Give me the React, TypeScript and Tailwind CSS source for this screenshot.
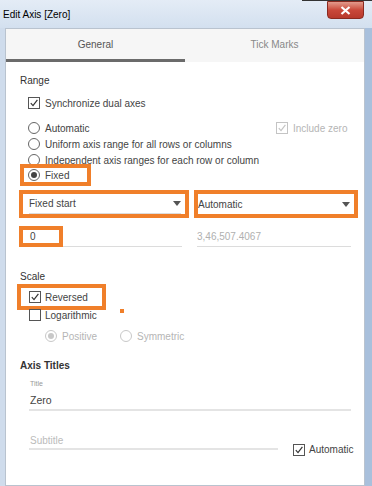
import React from "react";

const font = { fontFamily: '"Liberation Sans", Arial, sans-serif' };

// small square checkbox with optional tick
const Check = ({ on, dim }: { on?: boolean; dim?: boolean }) => (
  <span
    className={`flex h-[12px] w-[12px] shrink-0 items-center justify-center border bg-white ${
      dim ? "border-[#c4c4c4]" : "border-[#555]"
    }`}
  >
    {on && (
      <svg width="10" height="10" viewBox="0 0 10 10">
        <path
          d="M1.8 5.2 L4 7.6 L8.4 1.8"
          fill="none"
          stroke={dim ? "#c4c4c4" : "#333"}
          strokeWidth="1.2"
        />
      </svg>
    )}
  </span>
);

// round radio button
const Radio = ({ on, dim }: { on?: boolean; dim?: boolean }) => (
  <span
    className={`flex h-[12px] w-[12px] shrink-0 items-center justify-center rounded-full border bg-white ${
      dim ? "border-[#c8c8c8]" : "border-[#666]"
    }`}
  >
    {on && (
      <span
        className={`h-[6px] w-[6px] rounded-full ${dim ? "bg-[#c8c8c8]" : "bg-[#444]"}`}
      />
    )}
  </span>
);

const Arrow = () => (
  <svg width="8" height="5" viewBox="0 0 8 5">
    <path d="M0 0 L8 0 L4 5 Z" fill="#555" />
  </svg>
);

export default function App() {
  return (
    <div
      style={font}
      className="flex h-[486px] w-[372px] flex-col overflow-hidden bg-[#c9d8ea] text-[10px] text-[#444]"
    >
      {/* window title bar */}
      <div className="relative flex h-[28px] shrink-0 items-center bg-gradient-to-b from-[#e4ecf6] to-[#d3e0ef] pl-[3px]">
        <span className="text-[10px] text-black">Edit Axis [Zero]</span>
        <div className="absolute right-[8px] top-[1px] flex h-[18px] w-[37px] items-center justify-center rounded-b-[4px] border border-[#8a2a20] bg-gradient-to-b from-[#e29a8c] via-[#c9483a] to-[#b8392c]">
          <svg width="11" height="9" viewBox="0 0 11 9">
            <path d="M1.5 1 L9.5 8 M9.5 1 L1.5 8" stroke="white" strokeWidth="2.2" />
          </svg>
        </div>
        <div className="absolute right-0 top-0 h-[1px] w-[70px] bg-[#333]" />
      </div>

      <div className="flex flex-1">
        <div className="w-[5px] shrink-0 bg-[#cfdcec]" />

        {/* dialog panel */}
        <div className="flex w-[360px] flex-col border border-[#b9c3cf] bg-white">
          {/* tabs */}
          <div className="flex h-[33px] shrink-0 bg-[#f6f6f6]">
            <div className="flex w-[180px] flex-col">
              <div className="flex flex-1 items-center justify-center text-[10px] text-[#555]">
                General
              </div>
              <div className="h-[3px] bg-[#6b6b6b]" />
            </div>
            <div className="flex w-[180px] items-center justify-center pb-[3px] text-[10px] text-[#888]">
              Tick Marks
            </div>
          </div>

          <div className="flex flex-col pl-[14px] pr-[6px]">
            {/* Range */}
            <div className="mt-[11px] h-[16px] font-medium leading-[16px] text-[#333]">Range</div>
            <div className="mt-[6px] flex h-[16px] items-center gap-[5px] pl-[8px]">
              <Check on />
              <span>Synchronize dual axes</span>
            </div>
            <div className="mt-[9px] flex h-[16px] items-center gap-[5px] pl-[8px]">
              <Radio />
              <span className="w-[226px]">Automatic</span>
              <Check on dim />
              <span className="text-[#b5b5b5]">Include zero</span>
            </div>
            <div className="flex h-[16px] items-center gap-[5px] pl-[8px]">
              <Radio />
              <span>Uniform axis range for all rows or columns</span>
            </div>
            <div className="flex h-[16px] items-center gap-[5px] pl-[8px]">
              <Radio />
              <span>Independent axis ranges for each row or column</span>
            </div>
            <div className="-mt-[4px] flex h-[22px] w-[71px] items-center gap-[5px] border-4 border-[#f07f2a] pl-[4px]">
              <Radio on />
              <span>Fixed</span>
            </div>

            {/* range dropdowns */}
            <div className="mt-[4px] flex gap-[5px]">
              <div className="-ml-[1px] flex h-[28px] w-[170px] flex-col border-4 border-[#f07f2a] pl-[6px] pr-[4px]">
                <div className="flex flex-1 items-center justify-between border-b border-[#dcdcdc]">
                  <span>Fixed start</span>
                  <Arrow />
                </div>
              </div>
              <div className="flex h-[28px] w-[164px] items-center justify-between border-4 border-[#f07f2a] pr-[4px]">
                <span>Automatic</span>
                <Arrow />
              </div>
            </div>

            {/* range values */}
            <div className="mt-[8px] flex gap-[15px] pl-[9px]">
              <div className="relative flex h-[21px] w-[153px] items-center border-b border-[#dcdcdc]">
                <span className="pl-[1px]">0</span>
                <div className="absolute -left-[10px] top-0 h-[21px] w-[44px] border-4 border-[#f07f2a]" />
              </div>
              <div className="flex h-[21px] w-[154px] items-center border-b border-[#dcdcdc] text-[#b0b0b0]">
                3,46,507.4067
              </div>
            </div>

            {/* Scale */}
            <div className="mt-[22px] h-[16px] font-medium leading-[16px] text-[#333]">Scale</div>
            <div className="-ml-[3px] -mt-[1px] flex h-[26px] w-[89px] items-center gap-[4px] border-4 border-[#f07f2a] pl-[8px]">
              <Check on />
              <span>Reversed</span>
            </div>
            <div className="relative -mt-[3px] flex h-[16px] items-center gap-[4px] pl-[9px]">
              <Check />
              <span>Logarithmic</span>
              <span className="absolute left-[100px] top-[2px] h-[4px] w-[4px] bg-[#f07f2a]" />
            </div>
            <div className="mt-[5px] flex h-[16px] items-center pl-[25px] text-[#b5b5b5]">
              <Radio on dim />
              <span className="ml-[5px] w-[58px]">Positive</span>
              <Radio dim />
              <span className="ml-[5px]">Symmetric</span>
            </div>

            {/* Axis Titles */}
            <div className="mt-[14px] h-[16px] font-bold leading-[16px] text-[#333]">Axis Titles</div>
            <div className="ml-[10px] mt-[5px] h-[10px] text-[7px] leading-[10px] text-[#999]">
              Title
            </div>
            <div className="ml-[9px] mt-[3px] flex h-[19px] w-[322px] items-start border-b-2 border-[#e4e4e4] pl-[1px] text-[10.5px] leading-[16px]">
              Zero
            </div>
            <div className="mt-[22px] flex items-start">
              <div className="ml-[9px] h-[17px] w-[249px] border-b-2 border-[#e4e4e4] pl-[1px] leading-[16px] text-[#bbb]">
                Subtitle
              </div>
              <div className="ml-[15px] mt-[9px] flex items-center gap-[4px]">
                <Check on />
                <span>Automatic</span>
              </div>
            </div>
          </div>
        </div>

        <div className="w-[7px] shrink-0 bg-[#a9c0dc]" />
      </div>
    </div>
  );
}
